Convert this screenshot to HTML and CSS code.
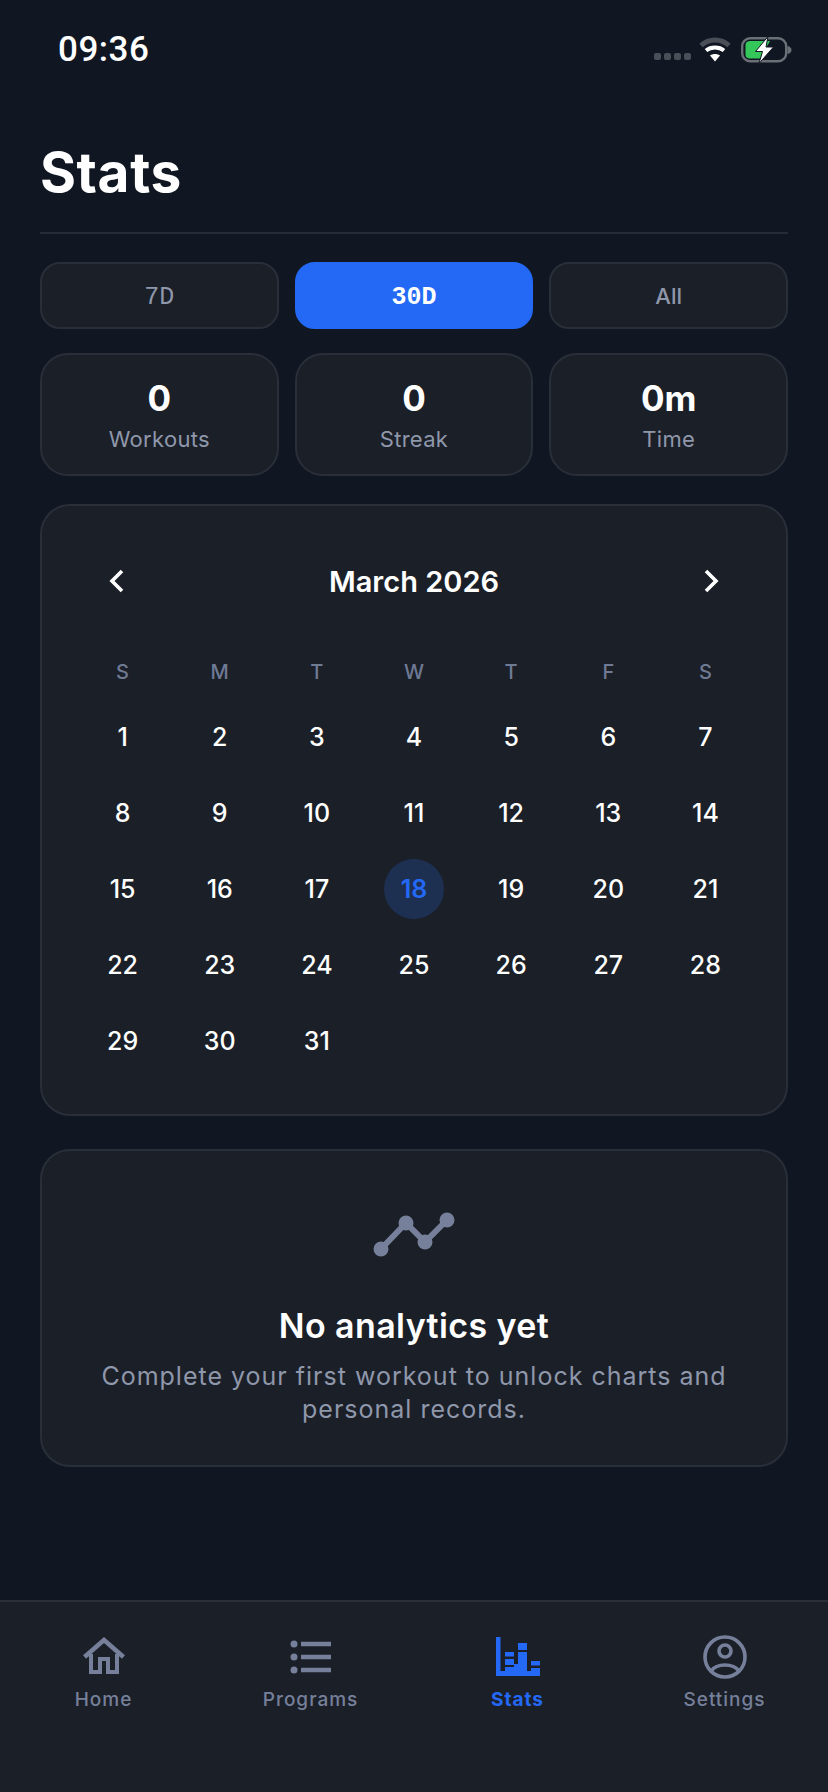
FILE: index.html
```html
<!DOCTYPE html>
<html lang="en">
<head>
    <meta charset="UTF-8">
    <meta name="viewport" content="width=device-width, initial-scale=1.0">
    <title>Stats</title>
    <link rel="stylesheet" href="styles.css">
</head>
<body>

<div class="status-bar">
    <span class="clock">09:36</span>
    <div class="status-icons">
        <div class="signal"><i></i><i></i><i></i><i></i></div>
        <svg class="wifi" width="32" height="25" viewBox="0 0 32 25">
            <path d="M2 8.5C10 1 22 1 30 8.5" fill="none" stroke="#4a4e57" stroke-width="5"/>
            <path d="M7 13.5C12 9.5 20 9.5 25 13.5" fill="none" stroke="#fff" stroke-width="4"/>
            <path d="M11 18.5C14 16.5 18 16.5 21 18.5L16 24.5Z" fill="#fff"/>
        </svg>
        <svg class="battery" width="54" height="30" viewBox="0 0 54 30">
            <rect x="2.2" y="4.2" width="44" height="23" rx="8" fill="none" stroke="#6b6f76" stroke-width="2.4"/>
            <path d="M47.5 12V20C50 19.5 51.5 18 51.5 16S50 12.500 47.5 12Z" fill="#6b6f76"/>
            <path d="M10 7H30L20 24.500H10C7.500 24.500 5.500 23 5.500 21V11C5.500 8.500 7.500 7 10 7Z" fill="#34c759"/>
            <path d="M28 2.500L15.500 17.500H22.500L19 29.500L33.500 13H26Z" fill="#fff" stroke="#101722" stroke-width="1"/>
        </svg>
    </div>
</div>

<main>
    <header class="page-header">
        <h1>Stats</h1>
    </header>

    <div class="range-row">
        <button class="range-btn mono">7D</button>
        <button class="range-btn mono active">30D</button>
        <button class="range-btn">All</button>
    </div>

    <div class="stat-row">
        <div class="stat-card"><strong>0</strong><span>Workouts</span></div>
        <div class="stat-card"><strong>0</strong><span>Streak</span></div>
        <div class="stat-card"><strong>0m</strong><span>Time</span></div>
    </div>

    <section class="card calendar">
        <div class="cal-header">
            <svg width="16" height="24" viewBox="0 0 16 24"><path d="M13 2L3 12L13 22" fill="none" stroke="#fff" stroke-width="3.6"/></svg>
            <h2>March 2026</h2>
            <svg width="16" height="24" viewBox="0 0 16 24"><path d="M3 2L13 12L3 22" fill="none" stroke="#fff" stroke-width="3.6"/></svg>
        </div>
        <div class="cal-grid">
            <div class="weekday">S</div><div class="weekday">M</div><div class="weekday">T</div><div class="weekday">W</div><div class="weekday">T</div><div class="weekday">F</div><div class="weekday">S</div>
            <div class="day">1</div><div class="day">2</div><div class="day">3</div><div class="day">4</div><div class="day">5</div><div class="day">6</div><div class="day">7</div>
            <div class="day">8</div><div class="day">9</div><div class="day">10</div><div class="day">11</div><div class="day">12</div><div class="day">13</div><div class="day">14</div>
            <div class="day">15</div><div class="day">16</div><div class="day">17</div><div class="day"><span class="today">18</span></div><div class="day">19</div><div class="day">20</div><div class="day">21</div>
            <div class="day">22</div><div class="day">23</div><div class="day">24</div><div class="day">25</div><div class="day">26</div><div class="day">27</div><div class="day">28</div>
            <div class="day">29</div><div class="day">30</div><div class="day">31</div>
        </div>
    </section>

    <section class="card empty">
        <svg width="84" height="46" viewBox="0 0 84 46" fill="#76809a">
            <path d="M9 37L34 11L53 30L75 8" fill="none" stroke="#76809a" stroke-width="6"/>
            <circle cx="9" cy="37" r="7.500"/>
            <circle cx="34" cy="11" r="7.500"/>
            <circle cx="53" cy="30" r="7.500"/>
            <circle cx="75" cy="8" r="7.500"/>
        </svg>
        <h3>No analytics yet</h3>
        <p>Complete your first workout to unlock charts and personal records.</p>
    </section>
</main>

<nav class="tab-bar">
    <a class="tab">
        <svg width="44" height="40" viewBox="0 0 44 40">
            <path d="M2.500 20L22 3L41.500 20" stroke="#76809a" stroke-width="4.600" fill="none"/>
            <path d="M9 17V35H18V22H26V35H35V17" fill="none" stroke="#76809a" stroke-width="4"/>
        </svg>
        <span>Home</span>
    </a>
    <a class="tab">
        <svg width="44" height="40" viewBox="0 0 44 40">
            <circle cx="5" cy="7" r="3.500" fill="#76809a"/>
            <circle cx="5" cy="20" r="3.500" fill="#76809a"/>
            <circle cx="5" cy="33" r="3.500" fill="#76809a"/>
            <path d="M12 7H42M12 20H42M12 33H42" stroke="#76809a" stroke-width="4.500"/>
        </svg>
        <span>Programs</span>
    </a>
    <a class="tab active">
        <svg width="44" height="40" viewBox="0 0 44 40" fill="#2469f5">
            <path d="M0 0H4.500V34H9V30H18V27H22V25H31V34H35V31H44V39H0Z"/>
            <rect x="9" y="15" width="9" height="4.500"/>
            <rect x="9" y="22" width="9" height="6"/>
            <rect x="22" y="6" width="9" height="7"/>
            <rect x="22" y="15" width="9" height="11"/>
            <rect x="35" y="24" width="9" height="4.500"/>
        </svg>
        <span>Stats</span>
    </a>
    <a class="tab">
        <svg width="44" height="44" viewBox="0 0 44 44" fill="none" stroke="#76809a" stroke-width="3.600">
            <circle cx="22" cy="22" r="20"/>
            <circle cx="22" cy="16" r="6"/>
            <path d="M8 36C14 28 30 28 36 36"/>
        </svg>
        <span>Settings</span>
    </a>
</nav>

</body>
</html>
```

FILE: styles.css
```css
* {
    box-sizing: border-box;
}

body {
    margin: 0;
    height: 1792px;
    display: flex;
    flex-direction: column;
    background-color: #101722;
    color: #ffffff;
    font-family: 'Inter', 'Roboto', sans-serif;
}

/* Status bar */
.status-bar {
    height: 100px;
    display: flex;
    justify-content: space-between;
    align-items: flex-start;
    padding: 32px 34px 0 58px;
}

.clock {
    font-family: 'Roboto', sans-serif;
    font-size: 35px;
    font-weight: 500;
    line-height: 36px;
    letter-spacing: 0.5px;
}

.status-icons {
    display: flex;
    align-items: flex-start;
}

.signal {
    display: flex;
    gap: 3px;
    margin-top: 21px;
    margin-right: 8px;
}

.signal i {
    width: 7px;
    height: 7px;
    border-radius: 2px;
    background-color: #4a4e57;
}

.wifi {
    margin-top: 5px;
    margin-right: 9px;
}

.battery {
    margin-top: 2px;
}

/* Page */
main {
    flex: 1;
    padding: 0 40px;
}

.page-header {
    height: 134px;
    padding-top: 44px;
    border-bottom: 2px solid #262b35;
}

h1 {
    margin: 0;
    font-size: 55px;
    font-weight: 700;
    line-height: 56px;
    letter-spacing: 0.6px;
}

.range-row,
.stat-row {
    display: grid;
    grid-template-columns: repeat(3, 1fr);
    gap: 16px;
}

.range-row {
    margin-top: 28px;
}

.range-btn {
    height: 67px;
    border: 2px solid #2a2e38;
    border-radius: 20px;
    background-color: #1b1f28;
    color: #8f97ab;
    font-family: 'Inter', sans-serif;
    font-size: 22px;
    font-weight: 500;
}

.range-btn.mono {
    padding-top: 4px;
    font-family: 'Liberation Mono', monospace;
    font-size: 25px;
}

.range-btn.active {
    border-color: #2469f5;
    background-color: #2469f5;
    color: #ffffff;
    font-weight: 700;
}

.stat-row {
    margin-top: 24px;
}

.stat-card {
    height: 123px;
    display: flex;
    flex-direction: column;
    align-items: center;
    justify-content: center;
    border: 2px solid #2a2e38;
    border-radius: 28px;
    background-color: #1b1f28;
}

.stat-card strong {
    font-size: 35px;
    font-weight: 700;
    line-height: 44px;
}

.stat-card span {
    margin-top: 4px;
    color: #8f97ab;
    font-size: 22px;
    line-height: 30px;
    letter-spacing: 0.3px;
}

.card {
    border: 2px solid #2a2e38;
    border-radius: 30px;
    background-color: #1b1f28;
}

/* Calendar */
.calendar {
    height: 612px;
    margin-top: 28px;
    padding: 51px 32px 0;
}

.cal-header {
    height: 48px;
    display: flex;
    justify-content: space-between;
    align-items: center;
    padding: 0 35px;
    margin-bottom: 40px;
}

.cal-header h2 {
    margin: 0;
    font-size: 29px;
    font-weight: 600;
}

.cal-grid {
    display: grid;
    grid-template-columns: repeat(7, 1fr);
    grid-template-rows: 54px repeat(5, 76px);
    align-items: center;
    justify-items: center;
}

.weekday {
    color: #6f7a94;
    font-size: 20px;
    font-weight: 500;
}

.day {
    font-size: 25px;
    font-weight: 500;
}

.today {
    width: 60px;
    height: 60px;
    display: flex;
    align-items: center;
    justify-content: center;
    border-radius: 50%;
    background-color: #1e3052;
    color: #2469f5;
    font-weight: 600;
}

/* Empty analytics card */
.empty {
    height: 318px;
    margin-top: 33px;
    padding: 61px 30px 0;
    display: flex;
    flex-direction: column;
    align-items: center;
    text-align: center;
}

.empty h3 {
    margin: 46px 0 0;
    font-size: 34px;
    font-weight: 600;
    line-height: 44px;
    letter-spacing: 0.4px;
}

.empty p {
    margin: 12px 0 0;
    color: #8f97ab;
    font-size: 25px;
    line-height: 33px;
    letter-spacing: 1px;
}

/* Bottom tabs */
.tab-bar {
    height: 192px;
    display: grid;
    grid-template-columns: repeat(4, 1fr);
    padding-top: 33px;
    border-top: 2px solid #2a2e38;
    background-color: #1b1f28;
}

.tab {
    display: flex;
    flex-direction: column;
    align-items: center;
    color: #76809a;
    font-size: 19px;
    font-weight: 500;
    letter-spacing: 1px;
}

.tab svg {
    height: 44px;
}

.tab span {
    margin-top: 9px;
}

.tab.active {
    color: #2469f5;
    font-weight: 700;
}
```
